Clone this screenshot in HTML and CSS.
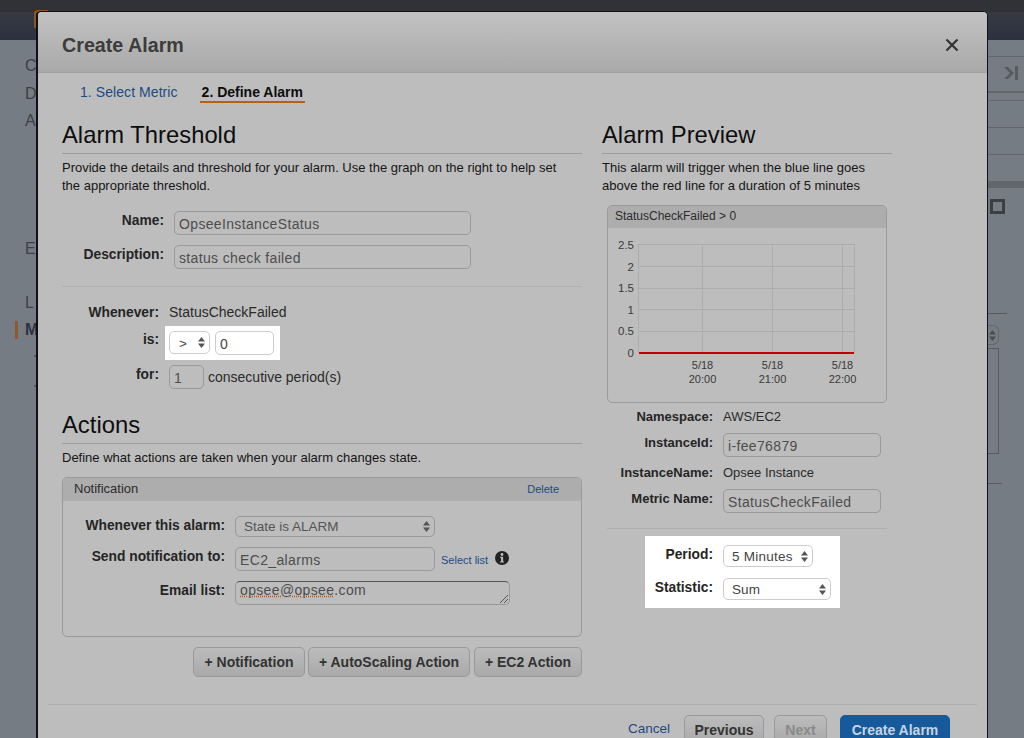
FILE: index.html
```html
<!DOCTYPE html>
<html lang="en">
<head>
<meta charset="utf-8">
<title>Create Alarm</title>
<link rel="stylesheet" href="styles.css">
</head>
<body>
<div class="page">
  <div class="topbar"><div class="topbar-strip"></div><div class="topbar-main"><span class="logo-mark"></span></div></div>
  <div class="behind">
    <nav class="side-left">
      <span class="bg-item first">C</span>
      <span class="bg-item">D</span>
      <span class="bg-item">A</span>
      <span class="bg-item gap-e">E</span>
      <span class="bg-item gap-l">L</span>
      <span class="bg-item active">M</span>
      <span class="speck s1"></span>
      <span class="speck s2"></span>
    </nav>
    <aside class="side-right">
      <div class="r-line r1"></div>
      <svg class="r-icon" width="16" height="14" viewBox="0 0 16 14"><path d="M1 1l6 6-6 6h4l6-6-6-6z" fill="#565b60"/><rect x="12" y="0" width="3" height="14" fill="#565b60"/></svg>
      <div class="r-line r2"></div>
      <div class="r-line r3"></div>
      <div class="r-line r4"></div>
      <div class="r-line r4"></div>
      <div class="r-band"></div>
      <div class="r-square"></div>
      <div class="r-line r5"></div>
      <div class="r-select"></div>
      <div class="r-box"></div>
      <div class="r-line r6"></div>
    </aside>
  </div>

  <section class="modal">
    <header class="modal-head">
      <h1 class="modal-title">Create Alarm</h1>
      <svg class="close" width="14" height="14" viewBox="0 0 14 14"><path d="M1.5 1.5l11 11M12.5 1.5l-11 11" stroke="#333" stroke-width="2.2" fill="none"/></svg>
    </header>
    <div class="steps">
      <a class="step">1. Select Metric</a>
      <a class="step current">2. Define Alarm</a>
    </div>
    <div class="columns">
      <div class="col-left">
        <h2 class="section-title">Alarm Threshold</h2>
        <p class="lead lead-wrap">Provide the details and threshold for your alarm. Use the graph on the right to help set the appropriate threshold.</p>
        <div class="form-row name-row"><label class="lbl">Name:</label><input class="field wide" value="OpseeInstanceStatus"></div>
        <div class="form-row desc-row"><label class="lbl">Description:</label><input class="field wide" value="status check failed"></div>
        <hr class="rule rule-form">
        <div class="cond-row when-row"><label class="lbl">Whenever:</label><span class="val">StatusCheckFailed</span></div>
        <div class="cond-row is-row">
          <label class="lbl">is:</label>
          <div class="highlight hl-is">
            <select class="sel sel-white sel-op"><option>&gt;</option></select>
            <input class="field white num" value="0">
          </div>
        </div>
        <div class="cond-row for-row"><label class="lbl">for:</label><input class="field count" value="1"><span class="val">consecutive period(s)</span></div>

        <h2 class="section-title actions-title">Actions</h2>
        <p class="lead">Define what actions are taken when your alarm changes state.</p>
        <div class="panel notif">
          <div class="panel-head"><span>Notification</span><a class="link small">Delete</a></div>
          <div class="notif-row n1"><label class="lbl">Whenever this alarm:</label><select class="sel sel-dim sel-state"><option>State is ALARM</option></select></div>
          <div class="notif-row n2"><label class="lbl">Send notification to:</label><input class="field list" value="EC2_alarms"><a class="link small select-list">Select list</a>
            <svg class="info" width="14" height="14" viewBox="0 0 14 14"><circle cx="7" cy="7" r="7" fill="#222"/><circle cx="7" cy="3.5" r="1.4" fill="#bdbdbd"/><path d="M5.2 5.8h2.9v4.6h1v1.2H5.1v-1.2h1V7H5.2z" fill="#bdbdbd"/></svg>
          </div>
          <div class="notif-row n3"><label class="lbl">Email list:</label><div class="field area"><span class="misspelt">opsee@opsee</span>.com</div></div>
        </div>
        <div class="action-btns">
          <button class="btn btn-action">+ Notification</button>
          <button class="btn btn-action">+ AutoScaling Action</button>
          <button class="btn btn-action">+ EC2 Action</button>
        </div>
      </div>

      <div class="col-right">
        <h2 class="section-title">Alarm Preview</h2>
        <p class="lead">This alarm will trigger when the blue line goes above the red line for a duration of 5 minutes</p>
        <div class="panel chart">
          <div class="panel-head chart-head"><span>StatusCheckFailed &gt; 0</span></div>
          <svg class="plot" width="278" height="174" viewBox="608 228 278 174">
            <g stroke="#adadad" stroke-width="1" fill="none">
              <path d="M638 244.5H854M638 266.5H854M638 288.5H854M638 309.5H854M638 331.5H854"/>
              <path d="M638.5 244V353M702.5 244V353M772.5 244V353M842.5 244V353M854.5 244V353"/>
            </g>
            <rect x="639" y="352" width="215" height="2" fill="#c00000"/>
            <g class="ticks-y" text-anchor="end">
              <text x="634" y="249">2.5</text><text x="634" y="271">2</text><text x="634" y="292">1.5</text><text x="634" y="314">1</text><text x="634" y="335">0.5</text><text x="634" y="357">0</text>
            </g>
            <g class="ticks-x" text-anchor="middle">
              <text x="702.5" y="369">5/18</text><text x="702.5" y="383">20:00</text>
              <text x="772.5" y="369">5/18</text><text x="772.5" y="383">21:00</text>
              <text x="842.5" y="369">5/18</text><text x="842.5" y="383">22:00</text>
            </g>
          </svg>
        </div>
        <div class="detail text-row ns"><label class="lbl">Namespace:</label><span class="val">AWS/EC2</span></div>
        <div class="detail inp-row"><label class="lbl">InstanceId:</label><input class="field detail-input" value="i-fee76879"></div>
        <div class="detail text-row iname"><label class="lbl">InstanceName:</label><span class="val">Opsee Instance</span></div>
        <div class="detail inp-row"><label class="lbl">Metric Name:</label><input class="field detail-input" value="StatusCheckFailed"></div>
        <hr class="rule rule-detail">
        <div class="highlight hl-period">
          <div class="period-row"><label class="lbl">Period:</label><select class="sel sel-white sel-period"><option>5 Minutes</option></select></div>
          <div class="period-row"><label class="lbl">Statistic:</label><select class="sel sel-white sel-stat"><option>Sum</option></select></div>
        </div>
      </div>
    </div>
    <footer class="modal-foot">
      <a class="link cancel">Cancel</a>
      <button class="btn foot-btn prev">Previous</button>
      <button class="btn foot-btn next">Next</button>
      <button class="btn foot-btn create">Create Alarm</button>
    </footer>
  </section>
</div>
</body>
</html>
```
FILE: styles.css
```css
* { box-sizing: border-box; }
html, body { margin: 0; height: 738px; overflow: hidden; }
body { font-family: "Liberation Sans", Arial, sans-serif; font-size: 13px; color: #222; background: #767c83; }
.page { position: relative; height: 738px; overflow: hidden; display: flex; flex-direction: column; }

.topbar { height: 40px; flex: none; display: flex; flex-direction: column; }
.topbar-strip { height: 12px; background: #303237; }
.topbar-main { flex: 1; background: linear-gradient(#363a41, #2c3141); padding: 0 0 0 34px; }
.logo-mark { display: block; width: 14px; height: 18px; margin-top: -2px; border-left: 2px solid #8a5424; border-top: 2px solid #8a5424; border-top-left-radius: 4px; }

.behind { flex: 1; display: flex; justify-content: space-between; }
.side-left { display: flex; flex-direction: column; align-items: flex-start; padding-left: 25px; width: 36px; font-size: 16px; color: #3d4048; }
.bg-item { display: block; height: 18px; line-height: 18px; margin-top: 9.5px; position: relative; }
.bg-item.first { margin-top: 17px; }
.bg-item.gap-e { margin-top: 110px; }
.bg-item.gap-l { margin-top: 36px; }
.bg-item.active { font-weight: bold; margin-top: 9px; color: #2c3242; }
.bg-item.active::before { content: ""; position: absolute; left: -10px; top: 0; width: 3px; height: 18px; background: #8d5a30; }
.speck { display: block; width: 2px; height: 2px; margin-left: 9px; background: #55595f; }
.s1 { margin-top: 16px; }
.s2 { margin-top: 28px; }

.side-right { width: 36px; display: flex; flex-direction: column; align-items: flex-start; }
.r-line { height: 1px; background: #62676d; width: 36px; flex: none; }
.r1 { margin-top: 16px; }
.r-icon { margin: 9px 0 0 15px; flex: none; }
.r2 { margin-top: 11px; height: 2px; }
.r3 { margin-top: 7px; }
.r4 { margin-top: 26px; }
.r-band { width: 36px; height: 7px; background: #62676d; margin-top: 26px; }
.r-square { width: 15px; height: 15px; border: 3px solid #3b3e43; margin: 11px 0 0 2px; }
.r5 { width: 19px; margin-top: 99px; background: #565b60; }
.r-select { width: 11px; height: 20px; border: 1px solid #62676d; border-left: 0; border-radius: 0 6px 6px 0; margin-top: 11px; background: no-repeat 1px center url("data:image/svg+xml,%3Csvg xmlns='http://www.w3.org/2000/svg' width='7' height='11'%3E%3Cpath d='M3.5 0L7 4.5H0zM3.5 11L0 6.5H7z' fill='%23494d52'/%3E%3C/svg%3E"); }
.r-box { width: 11px; height: 106px; border: 1px solid #565b60; border-left: 0; margin-top: 3px; }
.r6 { width: 14px; margin-top: 29px; background: #565b60; }

.modal { position: absolute; left: 36px; top: 11px; width: 952px; height: 760px; background: #bdbdbd; border: 2px solid #111; border-bottom: 0; border-width: 1px 1px 0 2px; border-radius: 5px 5px 0 0; }
.modal-head { height: 61px; display: flex; align-items: center; justify-content: space-between; padding: 6px 28px 0 24px; background: linear-gradient(#c2c2c2, #a9a9a9); border-bottom: 1px solid #a0a0a0; border-radius: 4px 4px 0 0; }
.modal-title { margin: 0; font-size: 19.7px; font-weight: bold; color: #3c3c3c; }
.close { display: block; }

.steps { height: 30px; padding-left: 42px; display: flex; align-items: flex-start; gap: 22px; font-size: 14px; }
.step { color: #1d4a86; height: 30px; padding-top: 11px; line-height: 16px; letter-spacing: .07px; }
.step.current { color: #0d0d0d; font-weight: bold; height: 30px; border-bottom: 2px solid #b5620f; padding: 11px 2px 0; line-height: 16px; letter-spacing: 0; }

.columns { height: 601px; display: flex; padding-left: 24px; }
.col-left { width: 520px; }
.col-right { width: 290px; margin-left: 20px; }
.section-title { margin: 0; font-size: 23.8px; font-weight: normal; line-height: 30px; padding: 17px 0 3px; height: 51px; color: #0d0d0d; border-bottom: 1px solid #9c9c9c; }
.lead { margin: 5px 0 0; font-size: 13px; line-height: 18px; color: #161616; }
.lead-wrap { max-width: 505px; }

.lbl { font-weight: bold; color: #252525; text-align: right; font-size: 13.8px; flex: none; }
.val { color: #2a2a2a; font-size: 14px; }
.field { height: 24px; border: 1px solid #999; border-radius: 5px; background: transparent; font: 14px "Liberation Sans", Arial, sans-serif; letter-spacing: .35px; color: #4d4d4d; padding: 2px 4px 0; margin: 0; outline: none; }
.field.white { background: #fff; border-color: #ccc; color: #444; }
.link { color: #1d4a86; }
.small { font-size: 11px; }

.form-row { display: flex; align-items: flex-start; gap: 10px; }
.form-row .lbl { width: 102px; line-height: 18px; padding-top: 1px; }
.name-row { margin-top: 16px; }
.desc-row { margin-top: 10px; }
.wide { width: 297px; }
.rule { border: 0; height: 1px; margin: 0; background: #afafaf; }
.rule-form { margin-top: 17px; }

.cond-row { display: flex; align-items: flex-start; }
.cond-row .lbl { width: 97px; margin-right: 10px; line-height: 18px; }
.cond-row .val { line-height: 18px; }
.when-row { margin-top: 16px; height: 18px; }
.when-row .lbl { padding-top: 1px; }
.is-row { margin-top: 5px; height: 34px; }
.is-row .lbl { margin-top: 5px; margin-right: 6px; }
.highlight { background: #fff; }
.hl-is { display: flex; gap: 5px; width: 115px; height: 34px; padding: 5px 4px; }
.for-row { margin-top: 5px; height: 24px; }
.for-row .lbl { margin-top: 1px; }
.count { width: 35px; }
.for-row .val { margin: 3px 0 0 4px; }

.sel { appearance: none; -webkit-appearance: none; height: 23px; border: 1px solid #ccc; border-radius: 5px; font: 13.5px "Liberation Sans", Arial, sans-serif; letter-spacing: .1px; margin: 0; padding: 1px 0 0 8px; outline: none; background-color: transparent; background-repeat: no-repeat; background-position: right 4px center; background-image: url("data:image/svg+xml,%3Csvg xmlns='http://www.w3.org/2000/svg' width='7' height='11'%3E%3Cpath d='M3.5 0L7 4.5H0zM3.5 11L0 6.5H7z' fill='%23555'/%3E%3C/svg%3E"); }
.sel-white { background-color: #fff; color: #444; }
.sel-dim { border-color: #999; color: #555; }
.sel-op { width: 41px; padding-left: 9px; }
.num { width: 59px; }
.sel-state { width: 200px; height: 21px; padding-top: 0; letter-spacing: 0; }
.sel-period { width: 90px; height: 22px; letter-spacing: .25px; }
.sel-stat { width: 108px; height: 22px; }

.actions-title { margin-top: 4px; }
.panel { border: 1px solid #9a9a9a; border-radius: 5px; overflow: hidden; }
.panel-head { height: 23px; background: #adadad; display: flex; justify-content: space-between; align-items: center; padding: 0 22px 2px 11px; color: #2c2c2c; }
.notif { margin-top: 10px; height: 160px; }
.notif-row { display: flex; align-items: flex-start; gap: 10px; }
.notif-row .lbl { width: 162px; line-height: 18px; }
.n1 { margin-top: 15px; height: 21px; }
.n1 .lbl { margin-top: 1px; }
.n2 { margin-top: 10px; height: 24px; }
.n2 .lbl { margin-top: 1px; }
.n3 { margin-top: 10px; }
.n3 .lbl { margin-top: 1px; }
.list { width: 200px; }
.select-list { margin: 6px 0 0 -4px; line-height: 14px; }
.info { margin: 4px 0 0 -3px; }
.area { position: relative; width: 275px; height: 24px; line-height: 17px; padding: 0 4px; border-top-color: #555; }
.area::after { content: ""; position: absolute; right: 1px; bottom: 1px; width: 8px; height: 8px; background: linear-gradient(135deg, transparent 45%, #555 45%, #555 55%, transparent 55%, transparent 70%, #555 70%, #555 80%, transparent 80%); }
.misspelt { text-decoration: underline dotted #c0560c; }

.action-btns { margin-top: 10px; display: flex; justify-content: flex-end; gap: 3px; }
.btn { height: 30px; border: 1px solid #999; border-radius: 5px; background: linear-gradient(#bcbcbc, #a9a9a9); font: bold 14px "Liberation Sans", Arial, sans-serif; color: #333; padding: 0; margin: 0; }
.btn-action:nth-child(1) { width: 112px; }
.btn-action:nth-child(2) { width: 162px; }
.btn-action:nth-child(3) { width: 108px; margin-left: 1px; }

.chart { margin: 10px 0 0 5px; width: 280px; height: 198px; }
.chart-head { height: 22px; font-size: 12px; padding-left: 7px; }
.plot { display: block; }
.plot text { font-family: "Liberation Sans", Arial, sans-serif; fill: #3a3a3a; }
.ticks-y text { font-size: 11.5px; }
.ticks-x text { font-size: 11px; }

.detail { display: flex; align-items: flex-start; gap: 10px; }
.detail .lbl { width: 111px; line-height: 18px; font-size: 13px; padding-top: 1px; }
.text-row { height: 18px; }
.text-row .val { line-height: 18px; font-size: 13px; padding-top: 1px; }
.ns { margin-top: 4px; }
.inp-row { margin-top: 8px; height: 24px; }
.iname { margin-top: 6px; }
.detail-input { width: 158px; }
.rule-detail { margin-top: 15px; width: 280px; margin-left: 5px; }
.hl-period { margin: 7px 0 0 43px; width: 195px; height: 72px; padding: 9px 0 0; display: flex; flex-direction: column; gap: 11px; }
.period-row { display: flex; gap: 10px; align-items: flex-start; }
.period-row .lbl { width: 68px; line-height: 18px; padding-top: 1px; }

.modal-foot { height: 60px; border-top: 1px solid #afafaf; margin: 0 10px 0 10px; padding: 10px 27px 0 0; display: flex; justify-content: flex-end; align-items: flex-start; }
.cancel { margin-top: 6px; font-size: 13.5px; }
.foot-btn { height: 30px; margin-left: 10px; }
.prev { width: 80px; margin-left: 14px; }
.next { width: 53px; color: #8a8a8a; }
.create { width: 110px; margin-left: 13px; background: #175a9c; border-color: #175a9c; color: #c6d4e2; }
```
